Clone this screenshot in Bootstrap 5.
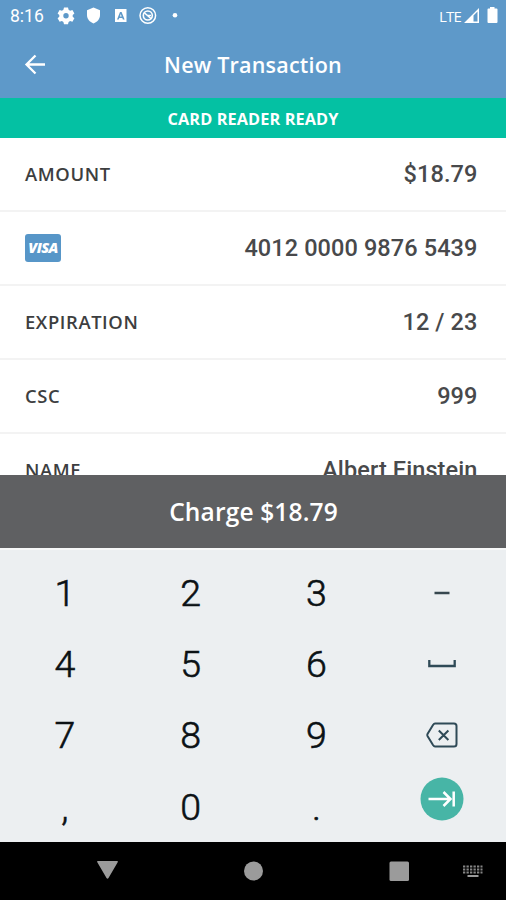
<!DOCTYPE html>
<html lang="en">
<head>
<meta charset="utf-8">
<meta name="viewport" content="width=device-width, initial-scale=1">
<title>New Transaction</title>
<link href="https://cdn.jsdelivr.net/npm/bootstrap@5.3.0/dist/css/bootstrap.min.css" rel="stylesheet">
<style>
body{font-family:"Open Sans",sans-serif;background:#fff}
.screen{height:900px;width:100%}
.screen svg{display:block;flex:none}
.app-head{background:#5e99c9;height:98px;color:#fff}
.status{height:32px;font:400 17.5px/32px Roboto,sans-serif;padding:0 7px 0 10px}
.status-icons{margin-left:6px}
.lte{font:400 15px/30px "Open Sans",sans-serif;letter-spacing:-.8px;margin-right:2px}
.titlebar{height:66px;display:grid;grid-template-columns:70px 1fr 70px}
.title{font-size:21.5px;font-weight:600;letter-spacing:.2px;line-height:30px}
.ready{background:#04c1a3;color:#fff;height:40px;font-size:16.3px;font-weight:700;letter-spacing:.1px;padding-top:2px}
.fields{height:337px}
.field-row{height:74px;padding:1px 28.500px 0 25px;border-bottom:2px solid #f3f3f3;flex:none}
.field-label{font-size:18.4px;line-height:26px;font-weight:600;color:#3d3e40;letter-spacing:.6px;padding-bottom:1px}
.field-value{font:500 23.5px/30px Roboto,sans-serif;color:#48494b;letter-spacing:.1px;padding-bottom:1px}
.visa{width:36px;height:28px;margin-bottom:1px;border-radius:3px;background:#5796c8;color:#fff;font-size:14.5px;font-weight:800;font-style:italic;letter-spacing:-.6px;line-height:28px}
.charge{height:73px;background:#5f6062;color:#fff;border:0;border-radius:0;font-size:24.5px;font-weight:600}
.charge span{display:block;padding:2px 0 0 1px;letter-spacing:.15px}
.pad{height:294px;background:#eceff1;border-top:2px solid #f7f8f8;padding:7px 1px 0 2px;display:grid;grid-template-columns:repeat(4,1fr);grid-template-rows:repeat(4,71.3px);font:300 37.5px/1 Roboto,sans-serif;color:#0b1114;overflow:hidden}
.pad span{padding-top:2px;-webkit-text-stroke:.6px #0b1114}
.navkeys{height:58px;background:#000}
</style>
</head>
<body>
<main class="screen d-flex flex-column overflow-hidden">
<header class="app-head">
<div class="status d-flex align-items-center">
<span>8:16</span>
<svg class="status-icons me-auto" width="136" height="32" viewBox="50 0 136 32" fill="#fff">
<path fill-rule="evenodd" d="M64 7.500h4l.6 2.300 1.500.9 2.300-.7 2 3.500-1.700 1.600v1.600l1.700 1.600-2 3.400-2.300-.7-1.500.9-.6 2.300h-4l-.6-2.300-1.500-.9-2.300.7-2-3.400 1.700-1.600v-1.600l-1.700-1.600 2-3.500 2.300.7 1.500-.9zM66 13a2.700 2.700 0 1 0 0 5.400 2.700 2.700 0 0 0 0-5.400z"/>
<path d="M93.500 7.500l6.500 2.700v4.800c0 4-2.700 7-6.500 8.500-3.800-1.500-6.500-4.500-6.500-8.500v-4.800z"/>
<path fill-rule="evenodd" d="M115 9h11.500v13H115zM120 12l-3 7.500h1.700l.6-1.600h3l.6 1.600h1.700l-3-7.500zm.8 2l.9 2.500h-1.800z"/>
<g fill="none" stroke="#fff"><circle cx="147.800" cy="15.500" r="7.800" stroke-width="1.500"/><circle cx="147.800" cy="15.500" r="4.500" stroke-width="1.600"/><path d="M144 12.500l7.500 6.500M147.500 15.500h3.500" stroke-width="1.600"/></g>
<circle cx="175" cy="15.300" r="2.300"/>
</svg>
<span class="lte">LTE</span>
<svg width="36" height="32" viewBox="463 0 36 32" fill="#fff"><path fill-rule="evenodd" d="M464 23L479 8v15zM473.500 21.500h4v-10l-4 4z"/><path d="M490 7h4.500v1.500h2q1 0 1 1V22q0 1-1 1h-8q-1 0-1-1V9.500q0-1 1-1H490z"/></svg>
</div>
<div class="titlebar align-items-center">
<svg width="70" height="66" viewBox="0 32 70 66" fill="none" stroke="#fff" stroke-width="2.300"><path d="M45 64.500H27M35.500 55.500l-9 9 9 9"/></svg>
<div class="title text-center"><span>New Transaction</span></div>
</div>
</header>
<div class="ready d-flex align-items-center justify-content-center"><span>CARD READER READY</span></div>
<section class="fields overflow-hidden d-flex flex-column">
<div class="field-row d-flex align-items-center justify-content-between"><span class="field-label">AMOUNT</span><span class="field-value">$18.79</span></div>
<div class="field-row d-flex align-items-center justify-content-between"><span class="visa text-center">VISA</span><span class="field-value">4012 0000 9876 5439</span></div>
<div class="field-row d-flex align-items-center justify-content-between"><span class="field-label">EXPIRATION</span><span class="field-value">12 / 23</span></div>
<div class="field-row d-flex align-items-center justify-content-between"><span class="field-label">CSC</span><span class="field-value">999</span></div>
<div class="field-row d-flex align-items-center justify-content-between"><span class="field-label">NAME</span><span class="field-value">Albert Einstein</span></div>
</section>
<button class="charge w-100 p-0" type="button"><span>Charge $18.79</span></button>
<section class="pad align-items-center text-center">
<span>1</span><span>2</span><span>3</span>
<svg class="mx-auto" width="44" height="44" viewBox="-22 -22 44 44"><path d="M-7.500 0H7.500" stroke="#37474f" stroke-width="2.500"/></svg>
<span>4</span><span>5</span><span>6</span>
<svg class="mx-auto" width="44" height="44" viewBox="-22 -22 44 44" fill="none" stroke="#2f4a57" stroke-width="2.300"><path d="M-12.700-4V2H12.700V-4"/></svg>
<span>7</span><span>8</span><span>9</span>
<svg class="mx-auto" width="44" height="44" viewBox="-22 -22 44 44" fill="none" stroke="#2f4a57" stroke-width="2" stroke-linejoin="round"><path d="M-7-11.500H12Q14.500-11.500 14.500-9V9Q14.500 11.500 12 11.500H-7Q-8 11.500-9 10L-14.500 1Q-15 0-14.500-1L-9-10Q-8-11.500-7-11.500zM-3.200-4.500L6.400 5M6.400-4.500L-3.200 5"/></svg>
<span>,</span><span>0</span><span>.</span>
<svg class="mx-auto mb-3" width="44" height="44" viewBox="-22 -22 44 44" fill="none" stroke="#fff" stroke-width="2.500"><circle r="21.500" fill="#47b5a6" stroke="none"/><path d="M-13.500 0H8M1.500-7L8.500 0 1.500 7M11.700-7.500V7.500"/></svg>
</section>
<nav class="navkeys">
<svg width="506" height="58" viewBox="0 842 506 58" fill="#9b9b9b"><path d="M98 861h19q1.500 0 .7 1.300L108.500 878q-1 1.500-2 0L97.300 862.300q-.8-1.300.7-1.300z"/><circle cx="253.500" cy="871" r="9.500"/><rect x="389.500" y="861.500" width="19.500" height="19.500" rx="1.500"/><g fill="none" stroke="#858585" stroke-width="2" stroke-dasharray="2.300 1.200"><path d="M463 866.500H482.500M463 869.500H482.500M463 872.500H482.500"/></g><path d="M467.500 875h11v2h-11z"/></svg>
</nav>
</main>
<script src="https://cdn.jsdelivr.net/npm/bootstrap@5.3.0/dist/js/bootstrap.bundle.min.js"></script>
</body>
</html>
